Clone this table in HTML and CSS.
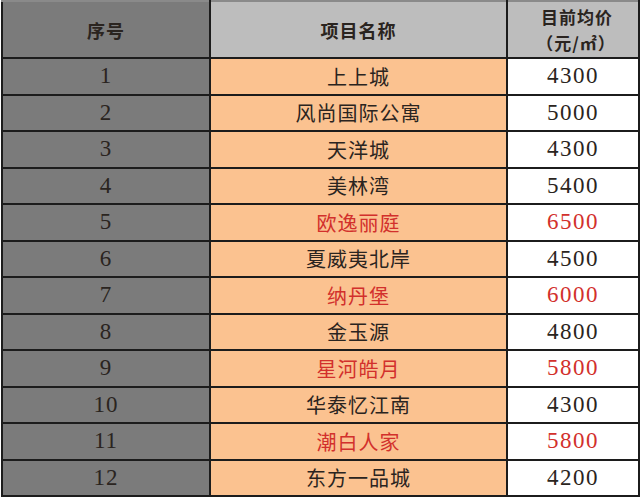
FILE: index.html
```html
<!DOCTYPE html>
<html lang="zh">
<head>
<meta charset="utf-8">
<link rel="stylesheet" href="styles.css">
</head>
<body>
<div class="wrap">
<table class="price">
  <colgroup><col class="c1"><col class="c2"><col class="c3"></colgroup>
  <thead>
    <tr>
      <th class="no">序号</th>
      <th class="name">项目名称</th>
      <th class="price-h"><span class="l1">目前均价</span><span class="l2">（元/㎡）</span></th>
    </tr>
  </thead>
  <tbody>
    <tr><td class="no">1</td><td class="name">上上城</td><td class="val">4300</td></tr>
    <tr><td class="no">2</td><td class="name">风尚国际公寓</td><td class="val">5000</td></tr>
    <tr><td class="no">3</td><td class="name">天洋城</td><td class="val">4300</td></tr>
    <tr><td class="no">4</td><td class="name">美林湾</td><td class="val">5400</td></tr>
    <tr class="hot"><td class="no">5</td><td class="name">欧逸丽庭</td><td class="val">6500</td></tr>
    <tr><td class="no">6</td><td class="name">夏威夷北岸</td><td class="val">4500</td></tr>
    <tr class="hot"><td class="no">7</td><td class="name">纳丹堡</td><td class="val">6000</td></tr>
    <tr><td class="no">8</td><td class="name">金玉源</td><td class="val">4800</td></tr>
    <tr class="hot"><td class="no">9</td><td class="name">星河皓月</td><td class="val">5800</td></tr>
    <tr><td class="no">10</td><td class="name">华泰忆江南</td><td class="val">4300</td></tr>
    <tr class="hot"><td class="no">11</td><td class="name">潮白人家</td><td class="val">5800</td></tr>
    <tr><td class="no">12</td><td class="name">东方一品城</td><td class="val">4200</td></tr>
  </tbody>
</table>
<div class="base"></div>
</div>
</body>
</html>
```
FILE: styles.css
```css
html, body {
  margin: 0;
  padding: 0;
  background: #ffffff;
}
.wrap {
  width: 640px;
  height: 497px;
  padding-left: 1px;
  box-sizing: border-box;
  display: flex;
  flex-direction: column;
}
.price {
  border-collapse: collapse;
  table-layout: fixed;
  width: 637px;
  font-family: "Liberation Serif", "Noto Sans CJK SC", serif;
  color: #2a2420;
}
.c1 { width: 208px; }
.c2 { width: 297px; }
.c3 { width: 132px; }
.price th, .price td {
  border: 2px solid #1c1c1c;
  text-align: center;
  padding: 0;
}
.price thead tr { height: 57px; }
.price th {
  font-family: "Noto Sans CJK SC", sans-serif;
  font-weight: 700;
  font-size: 18px;
  letter-spacing: 1px;
  background: #bdbdbd;
  border-top-color: #8a8a8a;
}
.price th.no { background: #7b7b7b; }
.price th.price-h {
  line-height: 26px;
  font-size: 17px;
}
.price th .l1 { display: block; padding-left: 8px; }
.price th .l2 { display: block; padding-left: 6px; }
.price tbody tr { height: 36.5px; }
.price td {
  font-size: 20px;
  letter-spacing: 1px;
}
.price td.no {
  background: #7b7b7b;
  font-family: "Liberation Serif", serif;
  font-size: 23px;
}
.price td.name { background: #fbc290; }
.price td.val {
  background: #ffffff;
  font-family: "Liberation Serif", serif;
  font-size: 23px;
  letter-spacing: 1.5px;
}
.price tr.hot td.name, .price tr.hot td.val { color: #d2302c; }
.base {
  height: 2px;
  margin-top: auto;
  background: #245e5c;
}
```
